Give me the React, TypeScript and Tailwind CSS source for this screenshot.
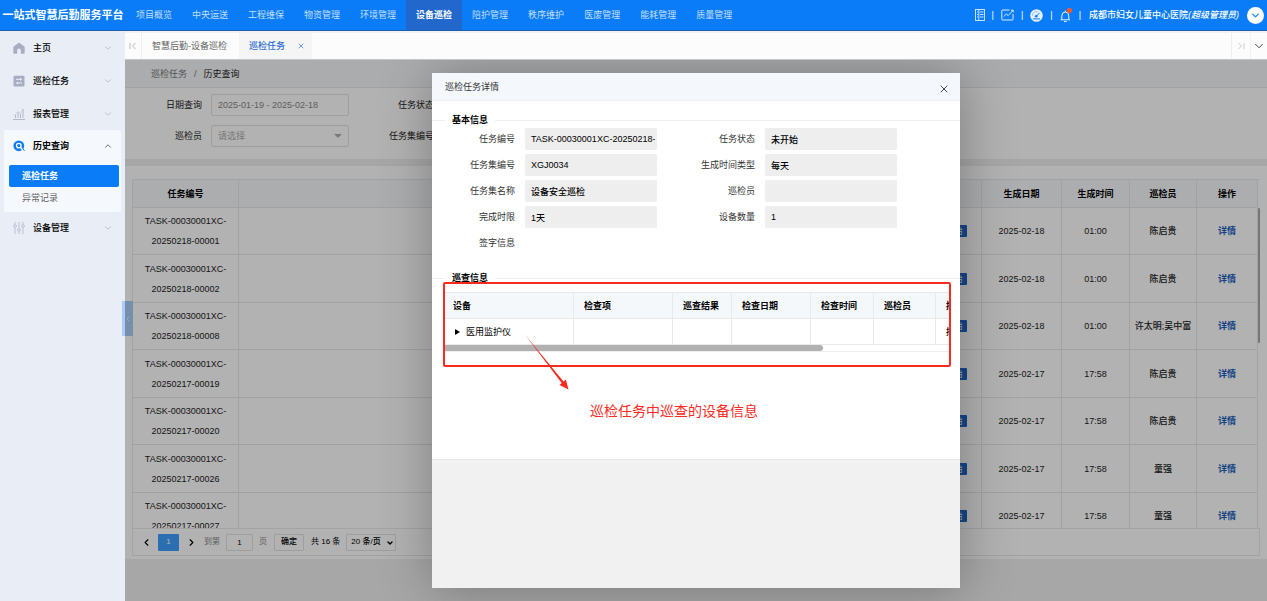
import React, { useState } from "react"
import { ChevronDown, ChevronLeft, ChevronRight, ChevronUp, X } from "lucide-react"
import clsx from "clsx"

const navItems = [
  "项目概览",
  "中央运送",
  "工程维保",
  "物资管理",
  "环境管理",
  "设备巡检",
  "陪护管理",
  "秩序维护",
  "医废管理",
  "能耗管理",
  "质量管理",
]

const tasks = [
  { id: "20250218-00001", date: "2025-02-18", time: "01:00", person: "陈启贵" },
  { id: "20250218-00002", date: "2025-02-18", time: "01:00", person: "陈启贵" },
  { id: "20250218-00008", date: "2025-02-18", time: "01:00", person: "许太明;吴中富" },
  { id: "20250217-00019", date: "2025-02-17", time: "17:58", person: "陈启贵" },
  { id: "20250217-00020", date: "2025-02-17", time: "17:58", person: "陈启贵" },
  { id: "20250217-00026", date: "2025-02-17", time: "17:58", person: "童强" },
  { id: "20250217-00027", date: "2025-02-17", time: "17:58", person: "童强" },
]

const detailFields = [
  ["任务编号", "TASK-00030001XC-20250218-00001"],
  ["任务状态", "未开始"],
  ["任务集编号", "XGJ0034"],
  ["生成时间类型", "每天"],
  ["任务集名称", "设备安全巡检"],
  ["巡检员", ""],
  ["完成时限", "1天"],
  ["设备数量", "1"],
]

const HomeIcon = () => (
  <svg viewBox="0 0 12 12" className="size-3" fill="#a9adc1">
    <path d="M6 .4 11.3 4.6q.4.4.4.9V11q0 .7-.7.7H7.8V8.2a1.8 1.8 0 0 0-3.6 0v3.500H1q-.7 0-.7-.7V5.500q0-.5.4-.9Z" />
  </svg>
)

const TaskIcon = () => (
  <svg viewBox="0 0 12 12" className="size-3">
    <rect x=".5" y=".8" width="11" height="10.800" rx="1" fill="#a9adc1" />
    <path d="M3 4.300h6M7.500 3.200v2.200M3 8h6M4.500 6.900v2.200" stroke="#e9edf6" fill="none" />
  </svg>
)

const ReportIcon = () => (
  <svg viewBox="0 0 12 12" className="size-3" stroke="#b4b8c9" fill="none">
    <path d="M0 11.500h12M2.500 7v3M5 4v6M7.500 6v4M10 1v9" />
    <path d="M1.500 7.500 5 3.500l2.500 2L10 1.500" strokeWidth=".5" />
  </svg>
)

const HistoryIcon = () => (
  <svg viewBox="0 0 12 12" className="size-3">
    <circle cx="5.800" cy="5.800" r="5.400" fill="#0d7cf7" />
    <circle cx="5.800" cy="5.600" r="2.300" fill="none" stroke="#fff" strokeWidth="1.300" />
    <path d="m7.300 7.200 4 4.200" stroke="#f5f9fd" strokeWidth="1.600" />
    <path d="m9.600 8.200 1.900 2.600" stroke="#0d7cf7" strokeWidth="1" />
  </svg>
)

const SlidersIcon = () => (
  <svg viewBox="0 0 12 12" className="size-3" stroke="#b4b8c9" fill="none" strokeWidth=".8">
    <path d="M2 0v2.500M2 5.500V12M6 0v6.500M6 9.500V12M10 0v2.500M10 5.500V12" />
    <circle cx="2" cy="4" r="1.400" />
    <circle cx="6" cy="8" r="1.400" />
    <circle cx="10" cy="4" r="1.400" />
  </svg>
)

const DocIcon = () => (
  <svg viewBox="0 0 10 12" className="h-3 w-[10px]" stroke="#dcecff" fill="none" strokeWidth=".9">
    <rect x=".5" y=".5" width="9" height="11" />
    <path d="M3.800.5v11M2 3h1M2 5.500h1M2 8h1M5 3h3.500M5 5.500h3.500M5 8h3.500" />
  </svg>
)

const TrendIcon = () => (
  <svg viewBox="0 0 13 12" className="h-3 w-[13px]" stroke="#dcecff" fill="none">
    <path d="M8.500 1H1.500Q.8 1 .8 1.700v8.600q0 .7.700.7h9.800q.7 0 .7-.7V5" />
    <path d="m2.800 7.500 2.600-2.600 1.800 1.700L12 1.500M9.800 1.200h2.400v2.200" />
  </svg>
)

const GaugeIcon = () => (
  <svg viewBox="0 0 13 13" className="size-[13px]">
    <circle cx="6.500" cy="6.500" r="6.300" fill="#e4f0ff" />
    <path d="M6.300 7.300 9.600 3.800M3 9.900h7" stroke="#0d7cf7" fill="none" />
    <path d="M2.300 6.800a4.200 4.200 0 0 1 5.500-4.100" stroke="#6fb1fb" strokeWidth=".7" fill="none" />
    <circle cx="6.200" cy="7.200" r="1.300" fill="#0d7cf7" />
  </svg>
)

const BellIcon = () => (
  <svg viewBox="0 0 12 15" className="h-[15px] w-3">
    <path d="M.5 11.800h9.500M1.800 11.500V8a3.500 4 0 0 1 7 0v3.500M5.300 4V2.600M4 13.600h2.600" stroke="#e6f1ff" fill="none" />
    <circle cx="9.400" cy="2.600" r="2.600" fill="#ff5722" />
  </svg>
)

function Header() {
  return (
    <header className="flex h-[31px] shrink-0 items-stretch border-b border-[#1e5eae] bg-[#0a7cf8] text-white">
      <h1 className="flex w-[126px] shrink-0 items-center justify-center text-[11px] font-bold whitespace-nowrap">一站式智慧后勤服务平台</h1>
      <nav className="flex">
        {navItems.map(item => (
          <a
            key={item}
            href="#"
            className={clsx("flex items-center px-[10px] whitespace-nowrap", item === "设备巡检" ? "bg-[#2267cb] font-bold" : "text-[#c4dffd]")}
          >
            {item}
          </a>
        ))}
      </nav>
      <div className="ml-auto flex items-center gap-2 pr-[3px] whitespace-nowrap">
        <div className="flex items-center gap-[7px]">
          <button aria-label="文档"><DocIcon /></button>
          <span>|</span>
          <button aria-label="统计"><TrendIcon /></button>
          <span>|</span>
          <button aria-label="仪表盘"><GaugeIcon /></button>
          <span>|</span>
          <button aria-label="消息"><BellIcon /></button>
          <span>|</span>
        </div>
        <span className="font-medium">
          成都市妇女儿童中心医院<i>(超级管理员)</i>
        </span>
        <button aria-label="账户" className="flex size-[17px] items-center justify-center rounded-full bg-white text-[#1e8bfa]">
          <ChevronDown size={11} strokeWidth={3} />
        </button>
      </div>
    </header>
  )
}

interface MenuRowProps {
  icon: React.ReactNode
  label: string
  open?: boolean
  onClick?: () => void
}

function MenuRow({ icon, label, open, onClick }: MenuRowProps) {
  return (
    <button className="flex h-8 w-full items-center gap-2 text-left font-medium text-black" onClick={onClick}>
      {icon}
      <span className={clsx("flex-1", open && "font-bold")}>{label}</span>
      {open ? <ChevronUp size={10} className="text-[#555]" /> : <ChevronDown size={10} className="text-[#b4b8c4]" />}
    </button>
  )
}

function Sidebar() {
  const [open, setOpen] = useState(true)

  return (
    <aside className="w-[125px] shrink-0 bg-[#e9edf6] pt-px">
      <div className="flex flex-col gap-px pr-3 pl-[13px]">
        <MenuRow icon={<HomeIcon />} label="主页" />
        <MenuRow icon={<TaskIcon />} label="巡检任务" />
        <MenuRow icon={<ReportIcon />} label="报表管理" />
      </div>
      <div className="mx-1 rounded-[2px] bg-[#f5f9fd] pb-[3px]">
        <div className="pr-2 pl-[9px]">
          <MenuRow icon={<HistoryIcon />} label="历史查询" open={open} onClick={() => setOpen(!open)} />
        </div>
        {open && (
          <div className="mt-[3px] pr-0.5 pl-[5px]">
            <a href="#" className="block h-[22px] rounded-[2px] bg-[#0a7cf8] px-[13px] leading-[22px] font-bold text-white">巡检任务</a>
            <a href="#" className="block h-[22px] px-[13px] leading-[22px] text-[#666]">异常记录</a>
          </div>
        )}
      </div>
      <div className="pr-3 pl-[13px]">
        <MenuRow icon={<SlidersIcon />} label="设备管理" />
      </div>
    </aside>
  )
}

function TabBar() {
  return (
    <div className="flex h-[29px] shrink-0 items-stretch border-t-2 border-b border-t-[#f2f2f2] border-b-[#c4c6c8] bg-[#fcfcfc]">
      <button aria-label="向左" className="flex w-[17px] items-center justify-center border-r border-[#eee] text-[#bbb]">
        <svg viewBox="0 0 8 8" className="size-2" stroke="currentColor" fill="none">
          <path d="M1 1v6M6.500 1l-3 3 3 3" />
        </svg>
      </button>
      <a href="#" className="flex items-center pr-3 pl-[10px] text-[#666]">智慧后勤-设备巡检</a>
      <div className="flex items-center gap-3 bg-[#f5f5f6] pr-[7px] pl-[10px] text-[#2a6cd2]">
        <a href="#" className="font-medium">巡检任务</a>
        <button aria-label="关闭标签"><X size={8} /></button>
      </div>
      <button aria-label="向右" className="ml-auto flex w-[19px] items-center justify-center border-l border-[#eee] text-[#ccc]">
        <svg viewBox="0 0 8 8" className="size-2" stroke="currentColor" fill="none">
          <path d="M1.500 1l3 3-3 3M7 1v6" />
        </svg>
      </button>
      <button aria-label="更多" className="flex w-[17px] items-center justify-center border-l border-[#f2f2f2] text-[#333]">
        <ChevronDown size={14} strokeWidth={1.5} />
      </button>
    </div>
  )
}

const fieldStyle = "h-[22px] w-[138px] rounded-[2px] border border-[#e2e2e2] bg-white px-[6px]"

function SearchForm() {
  return (
    <form className="grid shrink-0 grid-cols-[77px_138px_76px_138px] gap-x-[9px] gap-y-[9px] border-b border-[#eee] bg-white pt-[6px] pb-3">
      <label htmlFor="range" className="text-right leading-[22px]">日期查询</label>
      <input id="range" className={clsx(fieldStyle, "text-[#888]")} defaultValue="2025-01-19 - 2025-02-18" />
      <label htmlFor="status" className="text-right leading-[22px] whitespace-nowrap">任务状态</label>
      <input id="status" className={fieldStyle} />
      <label htmlFor="person" className="text-right leading-[22px]">巡检员</label>
      <div className="relative">
        <select id="person" className={clsx(fieldStyle, "appearance-none text-[#aaa]")}>
          <option>请选择</option>
        </select>
        <span className="pointer-events-none absolute top-[9px] right-[7px] border-x-4 border-t-4 border-x-transparent border-t-[#b0b0b0]" />
      </div>
      <label htmlFor="set" className="text-right leading-[22px] whitespace-nowrap">任务集编号</label>
      <input id="set" className={fieldStyle} />
    </form>
  )
}

function TaskTable() {
  return (
    <section className="mt-[5px] mb-[42px] flex min-h-0 flex-1 flex-col border-t border-[#eee] bg-white px-[7px] pt-[13px] pb-[3px]">
      <div className="relative min-h-0 flex-1 overflow-hidden border-t border-l border-[#eaeaea] pr-0.5">
        <table className="w-full table-fixed border-separate border-spacing-0 text-center">
          <colgroup>
            <col className="w-[106px]" />
            <col />
            <col className="w-[65px]" />
            <col className="w-20" />
            <col className="w-[68px]" />
            <col className="w-[67px]" />
            <col className="w-[61px]" />
          </colgroup>
          <thead>
            <tr className="h-7 bg-[#f5f8fb] text-black [&>th]:border-r [&>th]:border-b [&>th]:border-[#e8e8e8]">
              <th>任务编号</th>
              <th />
              <th />
              <th>生成日期</th>
              <th>生成时间</th>
              <th>巡检员</th>
              <th>操作</th>
            </tr>
          </thead>
          <tbody>
            {tasks.map(task => (
              <tr key={task.id} className="h-[47px] even:h-12 [&>td]:border-r [&>td]:border-b [&>td]:border-[#e8e8e8]">
                <td className="leading-5">
                  TASK-00030001XC-
                  <br />
                  {task.id}
                </td>
                <td />
                <td>
                  <span className="inline-block h-3 rounded-[1px] bg-[#1f66c4] px-1 leading-3 text-white">未开始</span>
                </td>
                <td>{task.date}</td>
                <td>{task.time}</td>
                <td className="font-medium whitespace-nowrap">{task.person}</td>
                <td>
                  <a href="#" className="font-bold text-[#1b5fbd]">详情</a>
                </td>
              </tr>
            ))}
          </tbody>
        </table>
        <div className="absolute top-7 right-0 h-[135px] w-0.5 rounded bg-[#aaa]" />
      </div>
      <div className="flex h-7 shrink-0 items-center border border-[#eaeaea] pl-2 text-[8px] text-black">
        <button aria-label="上一页"><ChevronLeft size={11} strokeWidth={2.5} /></button>
        <button className="ml-[6px] h-[17px] w-[21px] rounded-[1px] bg-[#409eff] text-white">1</button>
        <button aria-label="下一页" className="ml-[7px]"><ChevronRight size={11} strokeWidth={2.5} /></button>
        <label htmlFor="page" className="ml-[7px] text-[#888]">到第</label>
        <input id="page" className="mx-[6px] h-[17px] w-[27px] rounded-[1px] border border-[#e2e2e2] text-center" defaultValue="1" />
        <span className="text-[#888]">页</span>
        <button className="ml-[7px] h-[17px] w-[30px] rounded-[1px] border border-[#e2e2e2] font-medium">确定</button>
        <span className="ml-[7px]">共 16 条</span>
        <div className="relative ml-[6px]">
          <select aria-label="每页条数" className="h-[17px] w-[50px] appearance-none rounded-[1px] border border-[#e2e2e2] pl-1 font-medium">
            <option>20 条/页</option>
          </select>
          <ChevronDown size={8} strokeWidth={4} className="pointer-events-none absolute top-[5px] right-0.5" />
        </div>
      </div>
    </section>
  )
}

function DeviceTable() {
  return (
    <div className="overflow-hidden border-b border-[#eee]">
      <table className="w-[680px] table-fixed border-separate border-spacing-0 text-left">
        <colgroup>
          <col className="w-[131px]" />
          <col className="w-[99px]" />
          <col className="w-[59px]" />
          <col className="w-[79px]" />
          <col className="w-[63px]" />
          <col className="w-[62px]" />
          <col />
        </colgroup>
        <thead>
          <tr className="h-[27px] bg-[#f4f8fb] text-black [&>th]:border-t [&>th]:border-r [&>th]:border-b [&>th]:border-[#e9e9e9] [&>th]:pl-[10px]">
            <th>设备</th>
            <th>检查项</th>
            <th className="whitespace-nowrap">巡查结果</th>
            <th>检查日期</th>
            <th>检查时间</th>
            <th>巡检员</th>
            <th>描述</th>
          </tr>
        </thead>
        <tbody>
          <tr className="h-[26px] text-black [&>td]:border-r [&>td]:border-b [&>td]:border-[#e9e9e9] [&>td]:pl-[10px]">
            <td>
              <button className="flex items-center gap-[6px] pl-0.5">
                <span className="border-y-[3px] border-l-[5px] border-y-transparent border-l-black" />
                医用监护仪
              </button>
            </td>
            <td />
            <td />
            <td />
            <td />
            <td />
            <td className="font-medium">描述</td>
          </tr>
        </tbody>
      </table>
      <div className="h-[6px] w-3/4 rounded-r-full bg-[#b1b1b1]" />
    </div>
  )
}

function TaskDialog() {
  return (
    <div role="dialog" aria-label="巡检任务详情" className="relative flex h-[515px] w-[528px] flex-col bg-[#f1f1f1] shadow-[1px_1px_50px_rgba(0,0,0,0.3)]">
      <div className="flex h-7 items-center justify-between border-b border-[#f0f0f0] bg-[#f4f8fc] pr-[10px] pl-[13px]">
        <h2 className="text-[#333]">巡检任务详情</h2>
        <button aria-label="关闭" className="pt-1 text-[#444]"><X size={12} /></button>
      </div>
      <div className="h-[359px] border-b border-[#e8e8e8] bg-white pt-[11px]">
        <fieldset className="h-[158px] border-t border-[#eee]">
          <legend className="ml-[13px] px-[7px] leading-4 font-bold text-black">基本信息</legend>
          <div className="grid grid-cols-[83px_132px_88px_132px] gap-x-[10px] gap-y-1">
            {detailFields.map(([label, value]) => (
              <React.Fragment key={label}>
                <label htmlFor={label} className="text-right leading-[22px] text-[#333]">{label}</label>
                <input id={label} readOnly value={value} className="h-[22px] rounded-[2px] bg-[#eee] pr-0.5 pl-[6px] font-medium text-black" />
              </React.Fragment>
            ))}
            <span className="text-right leading-[22px] text-[#333]">签字信息</span>
          </div>
        </fieldset>
        <fieldset className="min-w-0 border-t border-[#eee] pr-[10px] pl-[11px]">
          <legend className="ml-0.5 px-[7px] leading-4 font-bold text-black">巡查信息</legend>
          <div className="pt-[6px]">
            <DeviceTable />
          </div>
        </fieldset>
      </div>

      {/* callout over the device table */}
      <div className="pointer-events-none absolute top-[209px] left-[11px] h-[85px] w-[508px] rounded-[2px] border-2 border-[#f92a1e]" />
      <svg viewBox="0 0 50 62" className="pointer-events-none absolute top-[258px] left-[90px] h-[62px] w-[50px]" fill="#f92a1e">
        <path d="M2.500 3 41.500 50.500l2.300-2L46.500 58.500 37.500 54l2.200-2Z" />
      </svg>
      <p className="absolute top-[328px] left-[158px] text-[14px] leading-5 whitespace-nowrap text-[#f92a1e]">巡检任务中巡查的设备信息</p>
    </div>
  )
}

function App() {
  return (
    <div className="flex h-screen flex-col overflow-hidden font-['Liberation_Sans','Noto_Sans_CJK_SC',sans-serif] text-[9px] leading-3 text-[#222]">
      <Header />
      <div className="flex min-h-0 flex-1">
        <Sidebar />
        <div className="flex min-w-0 flex-1 flex-col">
          <TabBar />
          <main className="relative flex min-h-0 flex-1 flex-col bg-[#f0f0f0]">
            <div className="flex h-7 shrink-0 items-center gap-[7px] border-b border-[#e8e8e8] bg-[#f5f7fa] pl-[26px]">
              <a href="#" className="text-[#777]">巡检任务</a>
              <span className="text-[#777]">/</span>
              <span>历史查询</span>
            </div>
            <SearchForm />
            <TaskTable />
            <button aria-label="收起菜单" className="absolute top-[241px] -left-[3px] flex h-[35px] w-[11px] items-center justify-center bg-[#a9cdf8] text-white">
              <ChevronLeft size={8} />
            </button>
            <div className="absolute inset-0 flex items-center justify-center overflow-hidden bg-black/30">
              <TaskDialog />
            </div>
          </main>
        </div>
      </div>
    </div>
  )
}

export default App
